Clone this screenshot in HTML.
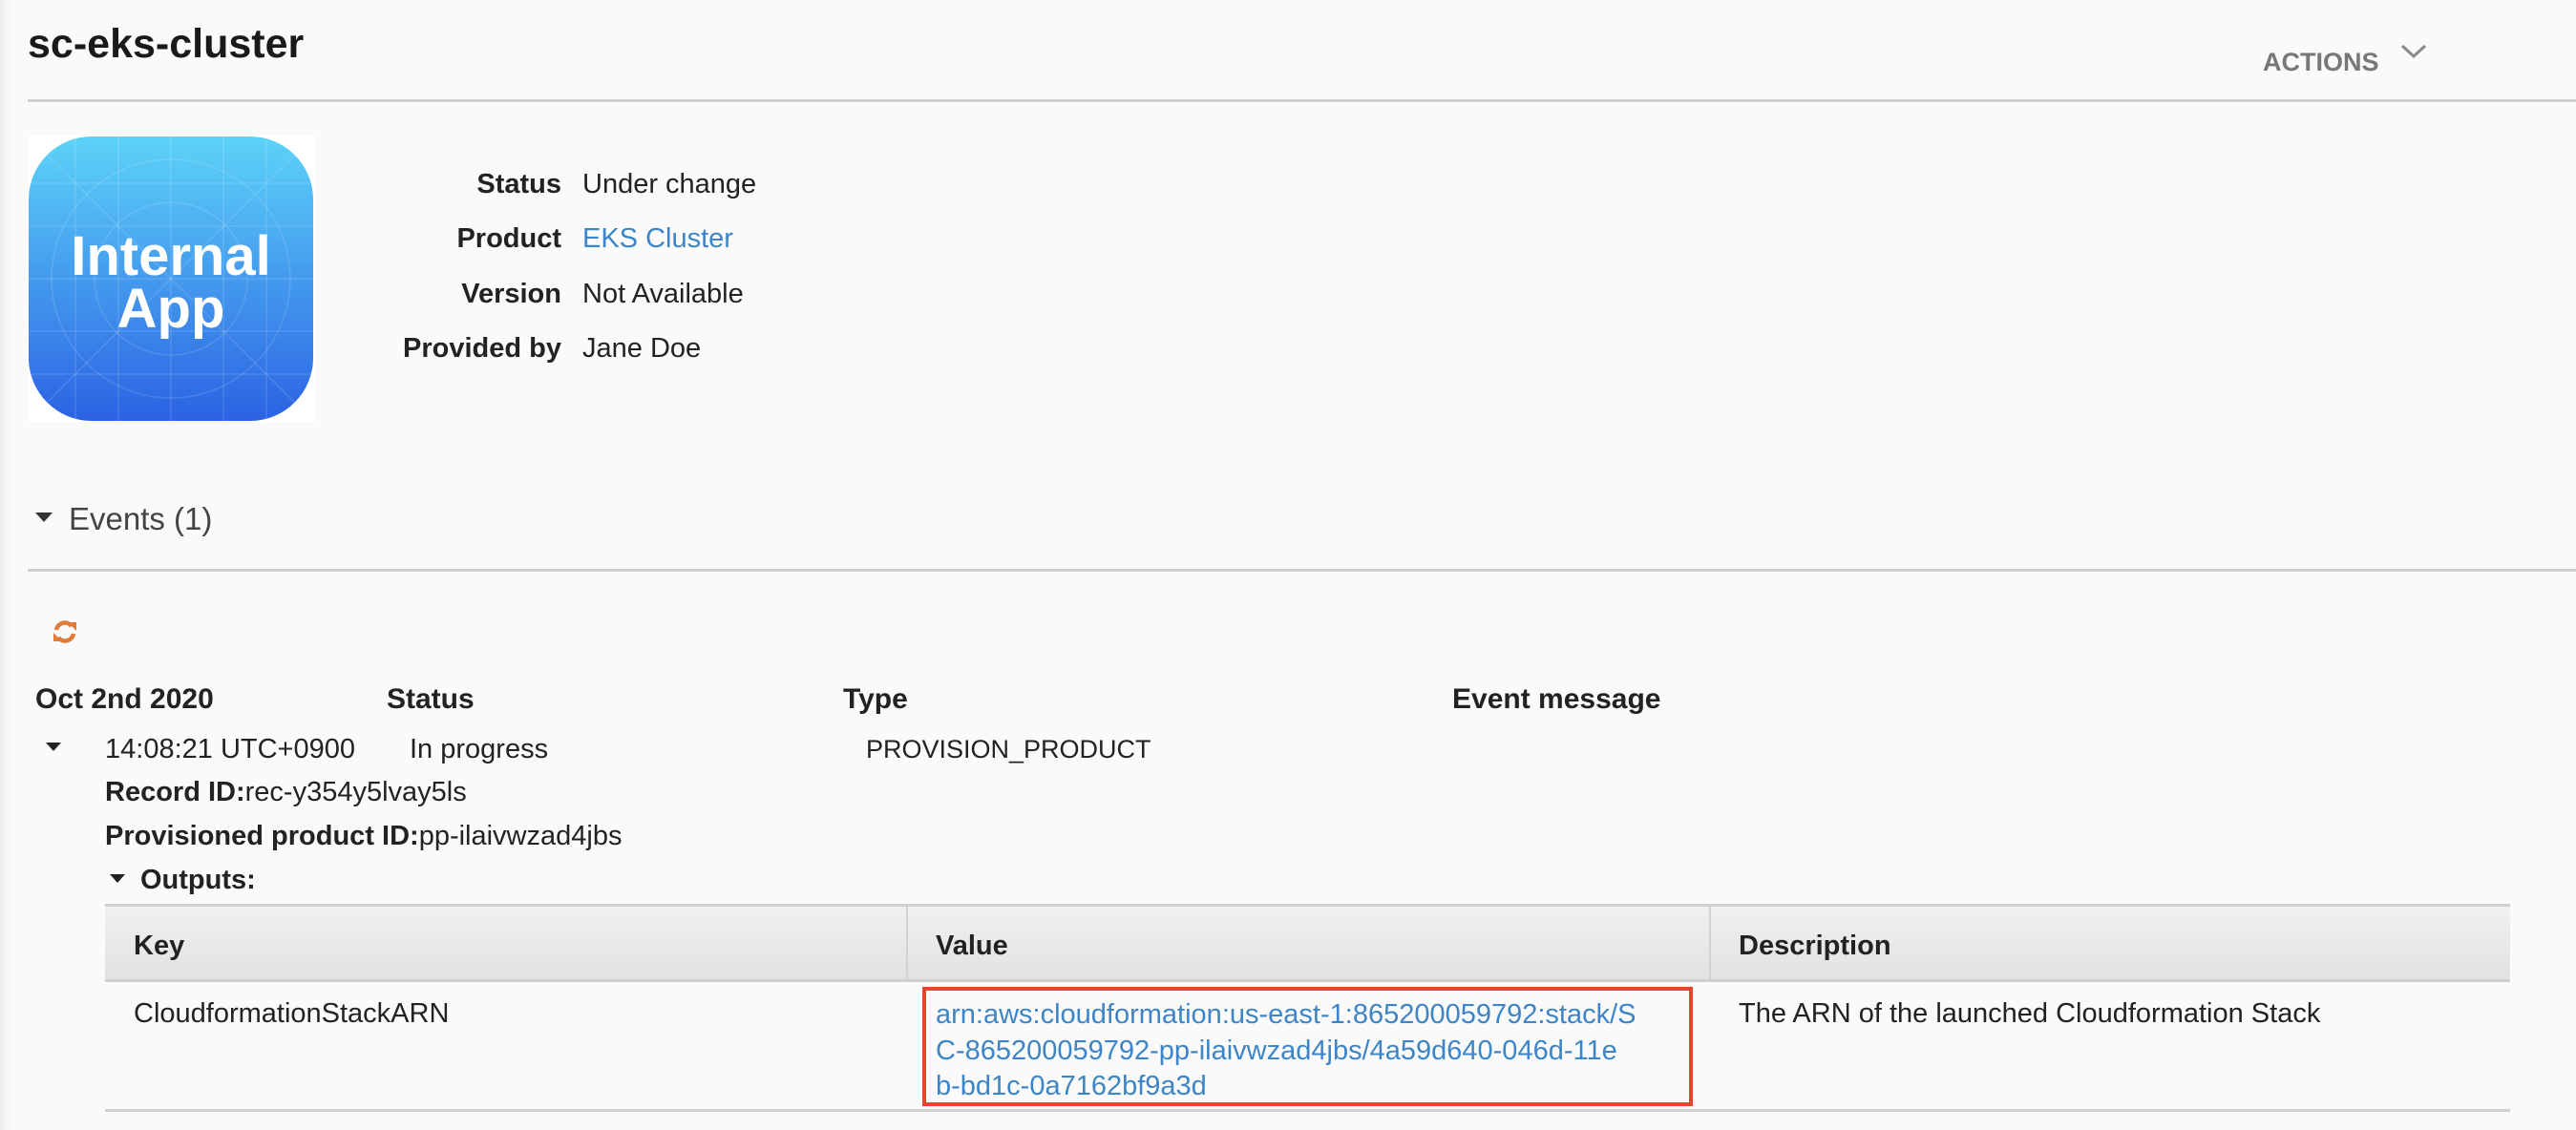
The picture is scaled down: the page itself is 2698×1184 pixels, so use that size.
<!DOCTYPE html>
<html><head><meta charset="utf-8"><style>
*{margin:0;padding:0;box-sizing:border-box}
html,body{width:2698px;height:1184px;overflow:hidden}
body{background:#fafafa;font-family:"Liberation Sans",Arial,sans-serif;color:#222;position:relative}
.a{position:absolute;white-space:nowrap;line-height:1}
.b{font-weight:bold}
.t{font-size:29px}
.h{font-size:30px;font-weight:bold}
.hr{position:absolute;height:3px;background:#cfcfcf}
.lnk{color:#3d85c6}
.tri{position:absolute;width:0;height:0;border-left:8px solid transparent;border-right:8px solid transparent;border-top:9px solid #222}
</style></head><body>
<div style="position:absolute;left:0;top:0;width:12px;height:1184px;background:linear-gradient(to right,#ececec,#fafafa)"></div>

<div class="a b" style="left:29px;top:25px;font-size:43px;color:#1a1a1a">sc-eks-cluster</div>
<div class="a b" style="left:2370px;top:52px;font-size:27px;color:#777">ACTIONS</div>
<svg style="position:absolute;left:2513px;top:44px" width="30" height="20"><path d="M3 4 L15 15 L27 4" stroke="#888" stroke-width="3" fill="none"/></svg>
<div class="hr" style="left:29px;top:104px;width:2669px"></div>

<div style="position:absolute;left:29px;top:142px;width:300px;height:300px;background:#fff">
<svg width="300" height="300" viewBox="0 0 300 300" style="position:absolute;left:0;top:0">
<defs><linearGradient id="g" x1="0" y1="0" x2="0" y2="1"><stop offset="0" stop-color="#5dd3f8"/><stop offset="1" stop-color="#2b62e3"/></linearGradient>
<clipPath id="c"><rect x="1" y="1" width="298" height="298" rx="66"/></clipPath></defs>
<rect x="1" y="1" width="298" height="298" rx="66" fill="url(#g)"/>
<g clip-path="url(#c)" stroke="#fff" stroke-opacity="0.13" stroke-width="1.5" fill="none">
<line x1="0" y1="0" x2="300" y2="300"/><line x1="300" y1="0" x2="0" y2="300"/>
<line x1="50" y1="0" x2="50" y2="300"/><line x1="95" y1="0" x2="95" y2="300"/><line x1="150" y1="0" x2="150" y2="300"/><line x1="205" y1="0" x2="205" y2="300"/><line x1="250" y1="0" x2="250" y2="300"/>
<line y1="50" x1="0" y2="50" x2="300"/><line y1="95" x1="0" y2="95" x2="300"/><line y1="150" x1="0" y2="150" x2="300"/><line y1="205" x1="0" y2="205" x2="300"/><line y1="250" x1="0" y2="250" x2="300"/>
<circle cx="150" cy="150" r="125"/><circle cx="150" cy="150" r="80"/>
</g></svg>
<div class="a b" style="left:0;width:300px;text-align:center;top:98px;font-size:58px;color:#fff">Internal</div>
<div class="a b" style="left:0;width:300px;text-align:center;top:153px;font-size:58px;color:#fff">App</div>
</div>

<div class="a b t" style="right:2110px;top:179px">Status</div>
<div class="a t" style="left:610px;top:179px">Under change</div>
<div class="a b t" style="right:2110px;top:236px">Product</div>
<div class="a t lnk" style="left:610px;top:236px">EKS Cluster</div>
<div class="a b t" style="right:2110px;top:294px">Version</div>
<div class="a t" style="left:610px;top:294px">Not Available</div>
<div class="a b t" style="right:2110px;top:351px">Provided by</div>
<div class="a t" style="left:610px;top:351px">Jane Doe</div>

<div class="tri" style="left:37px;top:537px;border-top-color:#333;border-width:10px 9px 0 9px"></div>
<div class="a" style="left:72px;top:527px;font-size:33px;color:#444">Events (1)</div>
<div class="hr" style="left:29px;top:596px;width:2669px"></div>

<svg style="position:absolute;left:55px;top:649px" width="26" height="26" viewBox="0 0 26 26"><g fill="none" stroke="#e07b39" stroke-width="4.5"><path d="M4 11 A9 9 0 0 1 20 7"/><path d="M22 15 A9 9 0 0 1 6 19"/></g><path d="M16 3 L25 3 L25 12 Z" fill="#e07b39"/><path d="M10 23 L1 23 L1 14 Z" fill="#e07b39"/></svg>

<div class="a h" style="left:37px;top:718px">Oct 2nd 2020</div>
<div class="a h" style="left:405px;top:718px">Status</div>
<div class="a h" style="left:883px;top:718px">Type</div>
<div class="a h" style="left:1521px;top:718px">Event message</div>

<div class="tri" style="left:48px;top:778px"></div>
<div class="a t" style="left:110px;top:771px">14:08:21 UTC+0900</div>
<div class="a t" style="left:429px;top:771px">In progress</div>
<div class="a" style="left:907px;top:772px;font-size:27px">PROVISION_PRODUCT</div>

<div class="a t" style="left:110px;top:816px"><b>Record ID:</b>rec-y354y5lvay5ls</div>
<div class="a t" style="left:110px;top:862px"><b>Provisioned product ID:</b>pp-ilaivwzad4jbs</div>
<div class="tri" style="left:115px;top:916px"></div>
<div class="a b t" style="left:147px;top:908px">Outputs:</div>

<div style="position:absolute;left:110px;top:947px;width:2519px;height:82px;background:linear-gradient(#f0f0f0,#e2e2e2);border-top:3px solid #cfcfcf;border-bottom:3px solid #cfcfcf"></div>
<div style="position:absolute;left:949px;top:950px;width:2px;height:76px;background:#d2d2d2"></div>
<div style="position:absolute;left:1790px;top:950px;width:2px;height:76px;background:#d2d2d2"></div>
<div class="a b t" style="left:140px;top:977px">Key</div>
<div class="a b t" style="left:980px;top:977px">Value</div>
<div class="a b t" style="left:1821px;top:977px">Description</div>

<div class="a t" style="left:140px;top:1048px">CloudformationStackARN</div>
<div style="position:absolute;left:966px;top:1034px;width:807px;height:125px;border:4px solid #e8432e"></div>
<div class="a lnk t" style="left:980px;line-height:37.5px;top:1045px">arn:aws:cloudformation:us-east-1:865200059792:stack/S<br>C-865200059792-pp-ilaivwzad4jbs/4a59d640-046d-11e<br>b-bd1c-0a7162bf9a3d</div>
<div class="a t" style="left:1821px;top:1048px">The ARN of the launched Cloudformation Stack</div>
<div class="hr" style="left:110px;top:1162px;width:2519px"></div>
</body></html>
